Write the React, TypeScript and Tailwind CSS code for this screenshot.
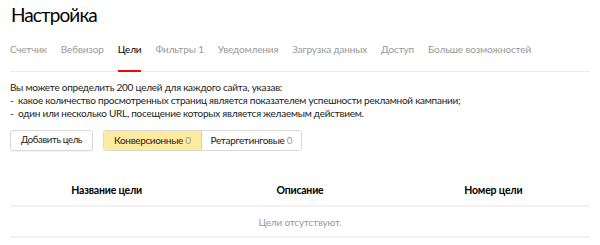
import React, { useState } from "react";

const tabs = [
  "Счетчик",
  "Вебвизор",
  "Цели",
  "Фильтры 1",
  "Уведомления",
  "Загрузка данных",
  "Доступ",
  "Больше возможностей",
];

const App: React.FC = () => {
  const [active, setActive] = useState("Цели");
  const [kind, setKind] = useState<"conv" | "retarg">("conv");

  return (
    <div className="w-[600px] h-[245px] bg-white overflow-hidden font-['Lato',sans-serif] text-[#222]">
      <h1 className="pl-[11px] pt-[2px] text-[19px] leading-[26px] text-black tracking-[-0.9px]">
        Настройка
      </h1>

      {/* tabs */}
      <div className="mt-[12px] mx-[10px] flex gap-[14px] border-b border-[#ececec] text-[10px] leading-[14px] tracking-[-0.15px]">
        {tabs.map((t) => (
          <button
            key={t}
            onClick={() => setActive(t)}
            className={
              "whitespace-nowrap pt-[2px] pb-[14px] border-b-2 -mb-px " +
              (active === t ? "text-black border-[#f00]" : "text-[#999] border-transparent")
            }
          >
            {t}
          </button>
        ))}
      </div>

      <div className="mt-[9px] px-[10px] text-[10px] leading-[13px] tracking-[-0.25px] text-[#222]">
        <p>Вы можете определить 200 целей для каждого сайта, указав:</p>
        <p>- &nbsp;какое количество просмотренных страниц является показателем успешности рекламной кампании;</p>
        <p>- &nbsp;один или несколько URL, посещение которых является желаемым действием.</p>
      </div>

      <div className="mt-[10px] px-[10px] flex items-center gap-[10px] text-[10px] tracking-[-0.35px]">
        <button className="h-[21px] px-[10px] text-[9.5px] border border-[#d9d9d9] rounded-[3px] bg-white text-[#222] shadow-[0_1px_1px_rgba(0,0,0,0.05)]">
          Добавить цель
        </button>
        <div className="flex h-[21px] border border-[#d9d9d9] rounded-[3px] overflow-hidden">
          <button
            onClick={() => setKind("conv")}
            className={"px-[10px] " + (kind === "conv" ? "bg-[#ffeba0] border-r border-[#e6d27a]" : "bg-white")}
          >
            Конверсионные <span className="text-[#999]">0</span>
          </button>
          <button
            onClick={() => setKind("retarg")}
            className={"px-[9px] " + (kind === "retarg" ? "bg-[#ffeba0]" : "bg-white")}
          >
            Ретаргетинговые <span className="text-[#999]">0</span>
          </button>
        </div>
      </div>

      {/* table */}
      <div className="mt-[32px] mx-[10px] text-[10px] leading-[14px] tracking-[-0.2px]">
        <div className="grid grid-cols-3 pb-[8px] border-b-2 border-[#f2f2f2] font-bold text-[10.5px] text-black text-center">
          <div>Название цели</div>
          <div>Описание</div>
          <div>Номер цели</div>
        </div>
        <div className="pt-[8px] pb-[7px] text-center text-[#999] border-b-2 border-[#f2f2f2]">Цели отсутствуют.</div>
      </div>
    </div>
  );
};

export default App;
